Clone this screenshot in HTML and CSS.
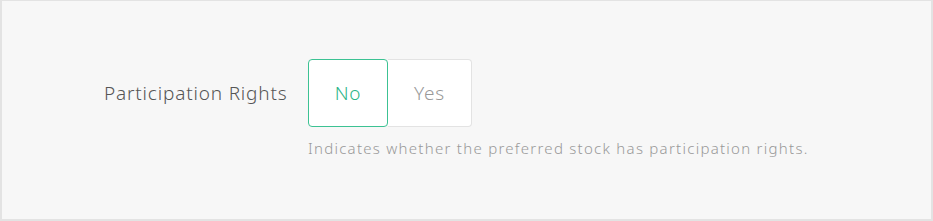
FILE: index.html
```html
<!DOCTYPE html>
<html lang="en">
<head>
  <meta charset="UTF-8" />
  <title>Participation Rights</title>
  <link rel="stylesheet" href="styles.css">
</head>
<body>
  <div class="panel">
    <div class="field">
      <label class="field-label">Participation Rights</label>
      <div class="field-body">
        <div class="toggle">
          <button class="toggle-btn active">No</button>
          <button class="toggle-btn">Yes</button>
        </div>
        <p class="hint">Indicates whether the preferred stock has participation rights.</p>
      </div>
    </div>
  </div>
</body>
</html>
```

FILE: styles.css
```css
html, body {
  margin: 0;
  padding: 0;
}
body {
  font-family: "Noto Sans", "Open Sans", sans-serif;
  font-weight: 300;
  background: #fff;
}
.panel {
  box-sizing: border-box;
  width: 933px;
  height: 221px;
  background: #f7f7f7;
  border: 2px solid #e3e3e3;
  border-top-width: 1px;
  padding: 58px 0 0 102px;
}
.field {
  display: flex;
  align-items: flex-start;
  gap: 22px;
}
.field-label {
  width: 182px;
  font-size: 19px;
  letter-spacing: 0.82px;
  white-space: nowrap;
  color: #555;
  line-height: 68px;
}
.toggle {
  display: flex;
}
.toggle-btn {
  height: 68px;
  width: 84px;
  font-family: inherit;
  font-weight: 300;
  font-size: 19px;
  letter-spacing: 0.8px;
  color: #999;
  background: #fff;
  border: 1px solid #e3e3e3;
  border-left: none;
  border-radius: 0 4px 4px 0;
  cursor: pointer;
}
.toggle-btn.active {
  width: 80px;
  color: #2bb588;
  border: 1.5px solid #3cc293;
  border-radius: 4px;
}
.hint {
  margin: 11px 0 0;
  font-size: 15px;
  letter-spacing: 1.27px;
  color: #999;
}
```
